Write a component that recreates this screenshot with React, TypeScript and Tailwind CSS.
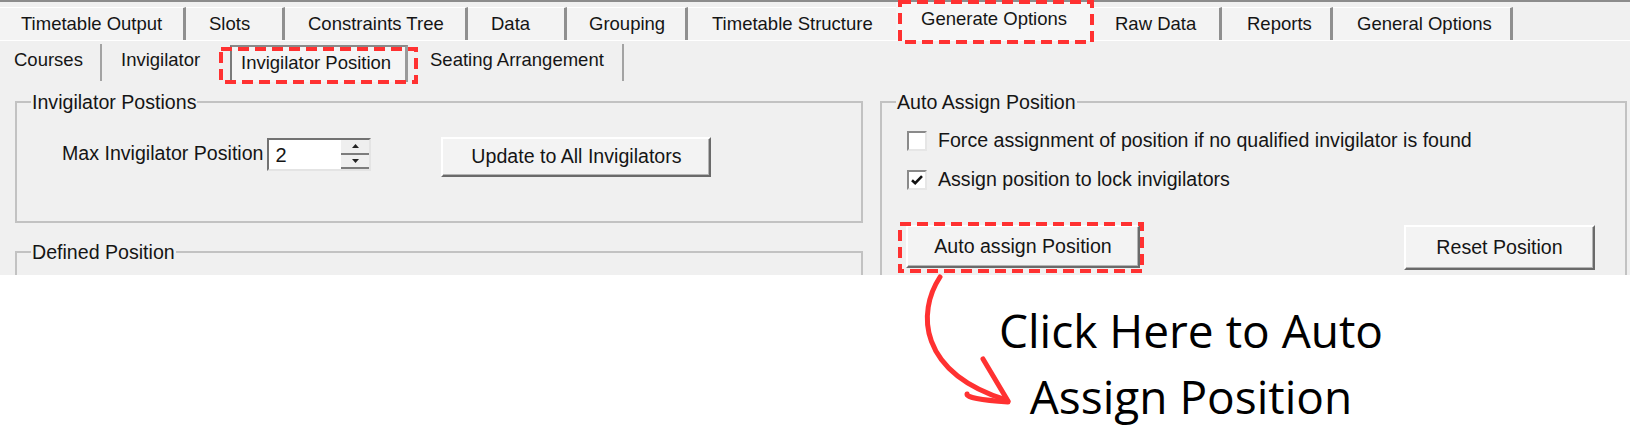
import React from "react";

type Tab = { label: string; cls: string };

const mainTabs: Tab[] = [
  { label: "Timetable Output", cls: "w-[186px] pl-[21px] border-r-[3px]" },
  { label: "Slots", cls: "w-[99px] pl-[23px] border-r-[3px]" },
  { label: "Constraints Tree", cls: "w-[183px] pl-[23px] border-r-[3px]" },
  { label: "Data", cls: "w-[99px] pl-[23px] border-r-[3px]" },
  { label: "Grouping", cls: "w-[121px] pl-[22px] border-r-[3px]" },
  { label: "Timetable Structure", cls: "w-[208px] pl-[24px]" },
];

const afterTabs: Tab[] = [
  { label: "Raw Data", cls: "w-[128px] pl-[21px] border-r-[3px]" },
  { label: "Reports", cls: "w-[111px] pl-[25px] border-r-[3px]" },
  { label: "General Options", cls: "w-[180px] pl-[24px] border-r-[3px]" },
];

function MainTab({ tab }: { tab: Tab }) {
  return (
    <div
      className={`flex h-[33px] items-center border-t border-t-white border-r-[#8f8f8f] bg-[#f3f3f3] text-[18.5px] leading-none ${tab.cls}`}
    >
      {tab.label}
    </div>
  );
}

function WinButton({ label, cls }: { label: string; cls: string }) {
  return (
    <div
      className={`flex items-center justify-center border-2 border-t-white border-l-white border-r-[#6a6a6a] border-b-[#6a6a6a] bg-[#f3f3f3] shadow-[inset_-1px_-1px_0_#b4b4b4] ${cls}`}
    >
      {label}
    </div>
  );
}

function CheckBox({ checked, label }: { checked?: boolean; label: string }) {
  return (
    <div className="flex h-[22px] items-center gap-[11px]">
      <span className="flex h-[20px] w-[20px] items-center justify-center border-2 border-t-[#8a8a8a] border-l-[#8a8a8a] border-r-[#e6e6e6] border-b-[#e6e6e6] bg-white">
        {checked && (
          <svg width="14" height="12" viewBox="0 0 14 12">
            <path d="M2 6.2 L5.2 9.2 L12 2.2" fill="none" stroke="#111" strokeWidth="2.6" />
          </svg>
        )}
      </span>
      <span>{label}</span>
    </div>
  );
}

function GroupBox({
  title,
  cls,
  children,
}: {
  title: string;
  cls: string;
  children?: React.ReactNode;
}) {
  return (
    <fieldset className={`border-2 border-[#c2c2c2] ${cls}`}>
      <legend className="ml-[14px] bg-[#f0f0f0] px-[1px] leading-[22px]">{title}</legend>
      {children}
    </fieldset>
  );
}

export default function App() {
  return (
    <div className="relative h-[433px] w-[1630px] overflow-hidden bg-white">
      <div className="h-[275px] overflow-hidden border-t-2 border-[#8c8c8c] bg-[#f0f0f0] font-['Liberation_Sans',Arial,sans-serif] text-[#151515]">
        {/* Main tabs */}
        <div className="flex h-[39px] items-end border-b border-white">
          {mainTabs.map((t) => (
            <MainTab key={t.label} tab={t} />
          ))}
          <div className="flex h-[38px] w-[198px] items-center bg-[#f6f6f6] pb-[3px] pl-[25px] text-[18.5px] leading-none">
            Generate Options
          </div>
          {afterTabs.map((t) => (
            <MainTab key={t.label} tab={t} />
          ))}
        </div>

        {/* Sub tabs */}
        <div className="flex h-[43px] text-[18.5px] leading-none">
          <div className="my-[3px] flex w-[102px] items-center border-r-2 border-[#a3a3a3] pb-[4px] pl-[14px]">
            Courses
          </div>
          <div className="flex w-[128px] items-center pb-[4px] pl-[19px]">Invigilator</div>
          <div className="mt-[4px] mb-[2px] flex w-[178px] items-center border-t-2 border-l-2 border-r-[3px] border-t-[#8a8a8a] border-l-[#7a7a7a] border-r-[#9a9a9a] bg-[#f5f5f5] pb-[2px] pl-[9px]">
            Invigilator Position
          </div>
          <div className="my-[3px] flex w-[216px] items-center border-r-2 border-[#a3a3a3] pb-[4px] pl-[22px]">
            Seating Arrangement
          </div>
        </div>

        {/* Content */}
        <div className="flex items-start gap-[17px] pl-[15px] pt-[7px] text-[19.6px]">
          <div className="flex w-[848px] flex-col gap-[18px]">
            <GroupBox title="Invigilator Postions" cls="h-[132px] pt-[24px]">
              <div className="flex items-start pl-[45px]">
                <span className="mt-[5px] leading-[22px]">Max Invigilator Position</span>
                <div className="mt-[1px] ml-[4px] flex h-[33px] w-[104px] border-2 border-t-[#727272] border-l-[#727272] border-r-[#e4e4e4] border-b-[#e4e4e4] bg-white">
                  <span className="flex-1 pl-[6px] pt-[3px] text-[20px] leading-[24px]">2</span>
                  <div className="flex w-[28px] flex-col bg-[#efefef]">
                    <div className="flex flex-1 items-center justify-center border-b-2 border-[#7c7c7c]">
                      <svg width="7" height="4" viewBox="0 0 7 4">
                        <path d="M3.5 0 L7 4 L0 4 Z" fill="#222" />
                      </svg>
                    </div>
                    <div className="flex flex-1 items-center justify-center border-b-2 border-[#7c7c7c]">
                      <svg width="7" height="4" viewBox="0 0 7 4">
                        <path d="M0 0 L7 0 L3.5 4 Z" fill="#222" />
                      </svg>
                    </div>
                  </div>
                </div>
                <WinButton label="Update to All Invigilators" cls="ml-[70px] h-[40px] w-[270px]" />
              </div>
            </GroupBox>
            <GroupBox title="Defined Position" cls="h-[100px]" />
          </div>

          <GroupBox title="Auto Assign Position" cls="h-[240px] w-[747px] pt-[17px]">
            <div className="flex flex-col gap-[17px] pl-[25px]">
              <CheckBox label="Force assignment of position if no qualified invigilator is found" />
              <CheckBox checked label="Assign position to lock invigilators" />
            </div>
            <div className="mt-[34px] flex items-start justify-between pl-[24px] pr-[30px]">
              <WinButton label="Auto assign Position" cls="h-[43px] w-[234px]" />
              <WinButton label="Reset Position" cls="h-[45px] w-[191px]" />
            </div>
          </GroupBox>
        </div>
      </div>

      {/* Caption */}
      <div className="flex pl-[971px] pt-[22px]">
        <p className="w-[440px] text-center font-['Open_Sans',sans-serif] text-[46px] leading-[66px] text-black">
          Click Here to Auto
          <br />
          Assign Position
        </p>
      </div>

      {/* Annotations */}
      <svg
        className="pointer-events-none absolute inset-0"
        width="1630"
        height="433"
        viewBox="0 0 1630 433"
        fill="none"
      >
        <g stroke="#ff3131" strokeWidth="4" strokeDasharray="11 6">
          <rect x="900" y="2" width="192" height="40" />
          <rect x="221" y="49" width="195" height="33" />
          <rect x="900" y="224" width="242" height="47" />
        </g>
        <g stroke="#ff3131" strokeWidth="5" strokeLinecap="round" strokeLinejoin="round">
          <path d="M940 277 C917 312 918 372 1006 400" />
          <path d="M983 359 L1008 401" />
          <path d="M967 394 Q966 399 1008 402" />
        </g>
      </svg>
    </div>
  );
}
